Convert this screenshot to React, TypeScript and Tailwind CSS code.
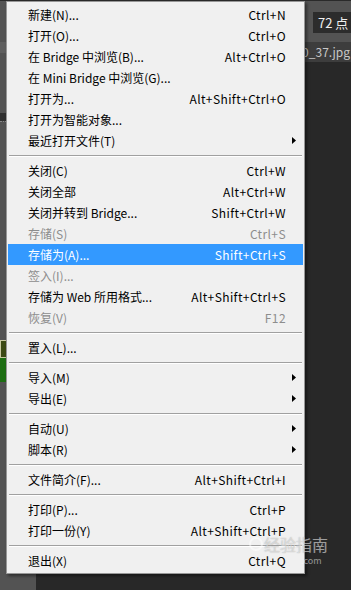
import React from "react";

type Item =
  | { sep: true }
  | { label: string; sc?: string; dis?: boolean; hi?: boolean; sub?: boolean; sep?: false };

const items: Item[] = [
  { label: "新建(N)...", sc: "Ctrl+N" },
  { label: "打开(O)...", sc: "Ctrl+O" },
  { label: "在 Bridge 中浏览(B)...", sc: "Alt+Ctrl+O" },
  { label: "在 Mini Bridge 中浏览(G)..." },
  { label: "打开为...", sc: "Alt+Shift+Ctrl+O" },
  { label: "打开为智能对象..." },
  { label: "最近打开文件(T)", sub: true },
  { sep: true },
  { label: "关闭(C)", sc: "Ctrl+W" },
  { label: "关闭全部", sc: "Alt+Ctrl+W" },
  { label: "关闭并转到 Bridge...", sc: "Shift+Ctrl+W" },
  { label: "存储(S)", sc: "Ctrl+S", dis: true },
  { label: "存储为(A)...", sc: "Shift+Ctrl+S", hi: true },
  { label: "签入(I)...", dis: true },
  { label: "存储为 Web 所用格式...", sc: "Alt+Shift+Ctrl+S" },
  { label: "恢复(V)", sc: "F12", dis: true },
  { sep: true },
  { label: "置入(L)..." },
  { sep: true },
  { label: "导入(M)", sub: true },
  { label: "导出(E)", sub: true },
  { sep: true },
  { label: "自动(U)", sub: true },
  { label: "脚本(R)", sub: true },
  { sep: true },
  { label: "文件简介(F)...", sc: "Alt+Shift+Ctrl+I" },
  { sep: true },
  { label: "打印(P)...", sc: "Ctrl+P" },
  { label: "打印一份(Y)", sc: "Alt+Shift+Ctrl+P" },
  { sep: true },
  { label: "退出(X)", sc: "Ctrl+Q" },
];

function Arrow({ white }: { white?: boolean }) {
  return (
    <svg width="4" height="7" viewBox="0 0 4 7" className="absolute right-[7px] top-[7px]">
      <path d="M0 0 L4 3.5 L0 7 Z" fill={white ? "#fff" : "#000"} />
    </svg>
  );
}

export default function App() {
  return (
    <div className="relative w-[351px] h-[590px] overflow-hidden bg-[#282828] font-['Noto_Sans_CJK_SC','Noto_Sans',sans-serif]">
      {/* background application chrome */}
      <div className="flex flex-col h-full">
        <div className="h-[42px] bg-[#535353] border-t border-[#2a2a2a] flex items-start justify-end pt-[11px]">
          <div className="w-[38px] h-[21px] bg-[#2c2c2c] text-[#f0f0f0] text-[13px] leading-[21px] pl-[5px] whitespace-nowrap">
            72 点
          </div>
        </div>
        <div className="flex flex-1">
          <div className="w-[36px] bg-[#535353] flex flex-col">
            <div className="h-[11px] bg-[#5f5f5f]" />
            <div className="h-[60px]" />
            <div className="h-[8px] bg-[#303030]" />
            <div className="h-px border-t border-dotted border-[#888]" />
            <div className="h-[218px]" />
            <div className="h-[18px] bg-[#3c4a14] border border-[#c8c8a0]" />
            <div className="h-[24px] bg-[#1d6e12]" />
          </div>
          <div className="flex-1 flex flex-col">
            <div className="h-[20px] bg-[#3d3d3d] flex items-center justify-end pr-[1px] text-[12px] text-[#c8c8c8] whitespace-nowrap">
              0_37.jpg
            </div>
            <div className="flex-1 bg-[#282828]" />
          </div>
        </div>
      </div>

      {/* menu */}
      <div className="absolute left-[6px] top-[1px] w-[299px] bg-[#f0f0f0] border border-[#979797] pt-[2px] pb-[2px] shadow-[2px_2px_3px_rgba(0,0,0,0.45)] text-[12px] text-black">
        {items.map((it, i) =>
          it.sep ? (
            <div key={i} className="h-[9px] flex flex-col justify-center mx-[2px]">
              <div className="h-px bg-[#a0a0a0]" />
              <div className="h-px bg-white" />
            </div>
          ) : (
            <div
              key={i}
              className={
                "relative h-[21px] mx-[1px] flex items-center justify-between pl-[20px] pr-[17px] whitespace-nowrap leading-[21px] " +
                (it.hi ? "bg-[#3399ff] text-white" : it.dis ? "text-[#8d8d8d]" : "text-black")
              }
            >
              <span>{it.label}</span>
              {it.sc && <span className="tracking-[0.4px]">{it.sc}</span>}
              {it.sub && <Arrow white={it.hi} />}
            </div>
          )
        )}
      </div>

      {/* watermark */}
      <div className="absolute left-[249px] top-[535px] flex items-center gap-[1px] text-[16px] leading-[18px] text-white/50 [text-shadow:0_0_1px_rgba(90,90,90,0.5)] whitespace-nowrap pointer-events-none">
        <span className="w-[14px] h-[14px] rounded-full border-2 border-white/50" />
        <span>经验指南</span>
      </div>
      <div className="absolute left-[301px] top-[556px] text-[9px] leading-[10px] text-white/50 whitespace-nowrap pointer-events-none">
        .com
      </div>
    </div>
  );
}
